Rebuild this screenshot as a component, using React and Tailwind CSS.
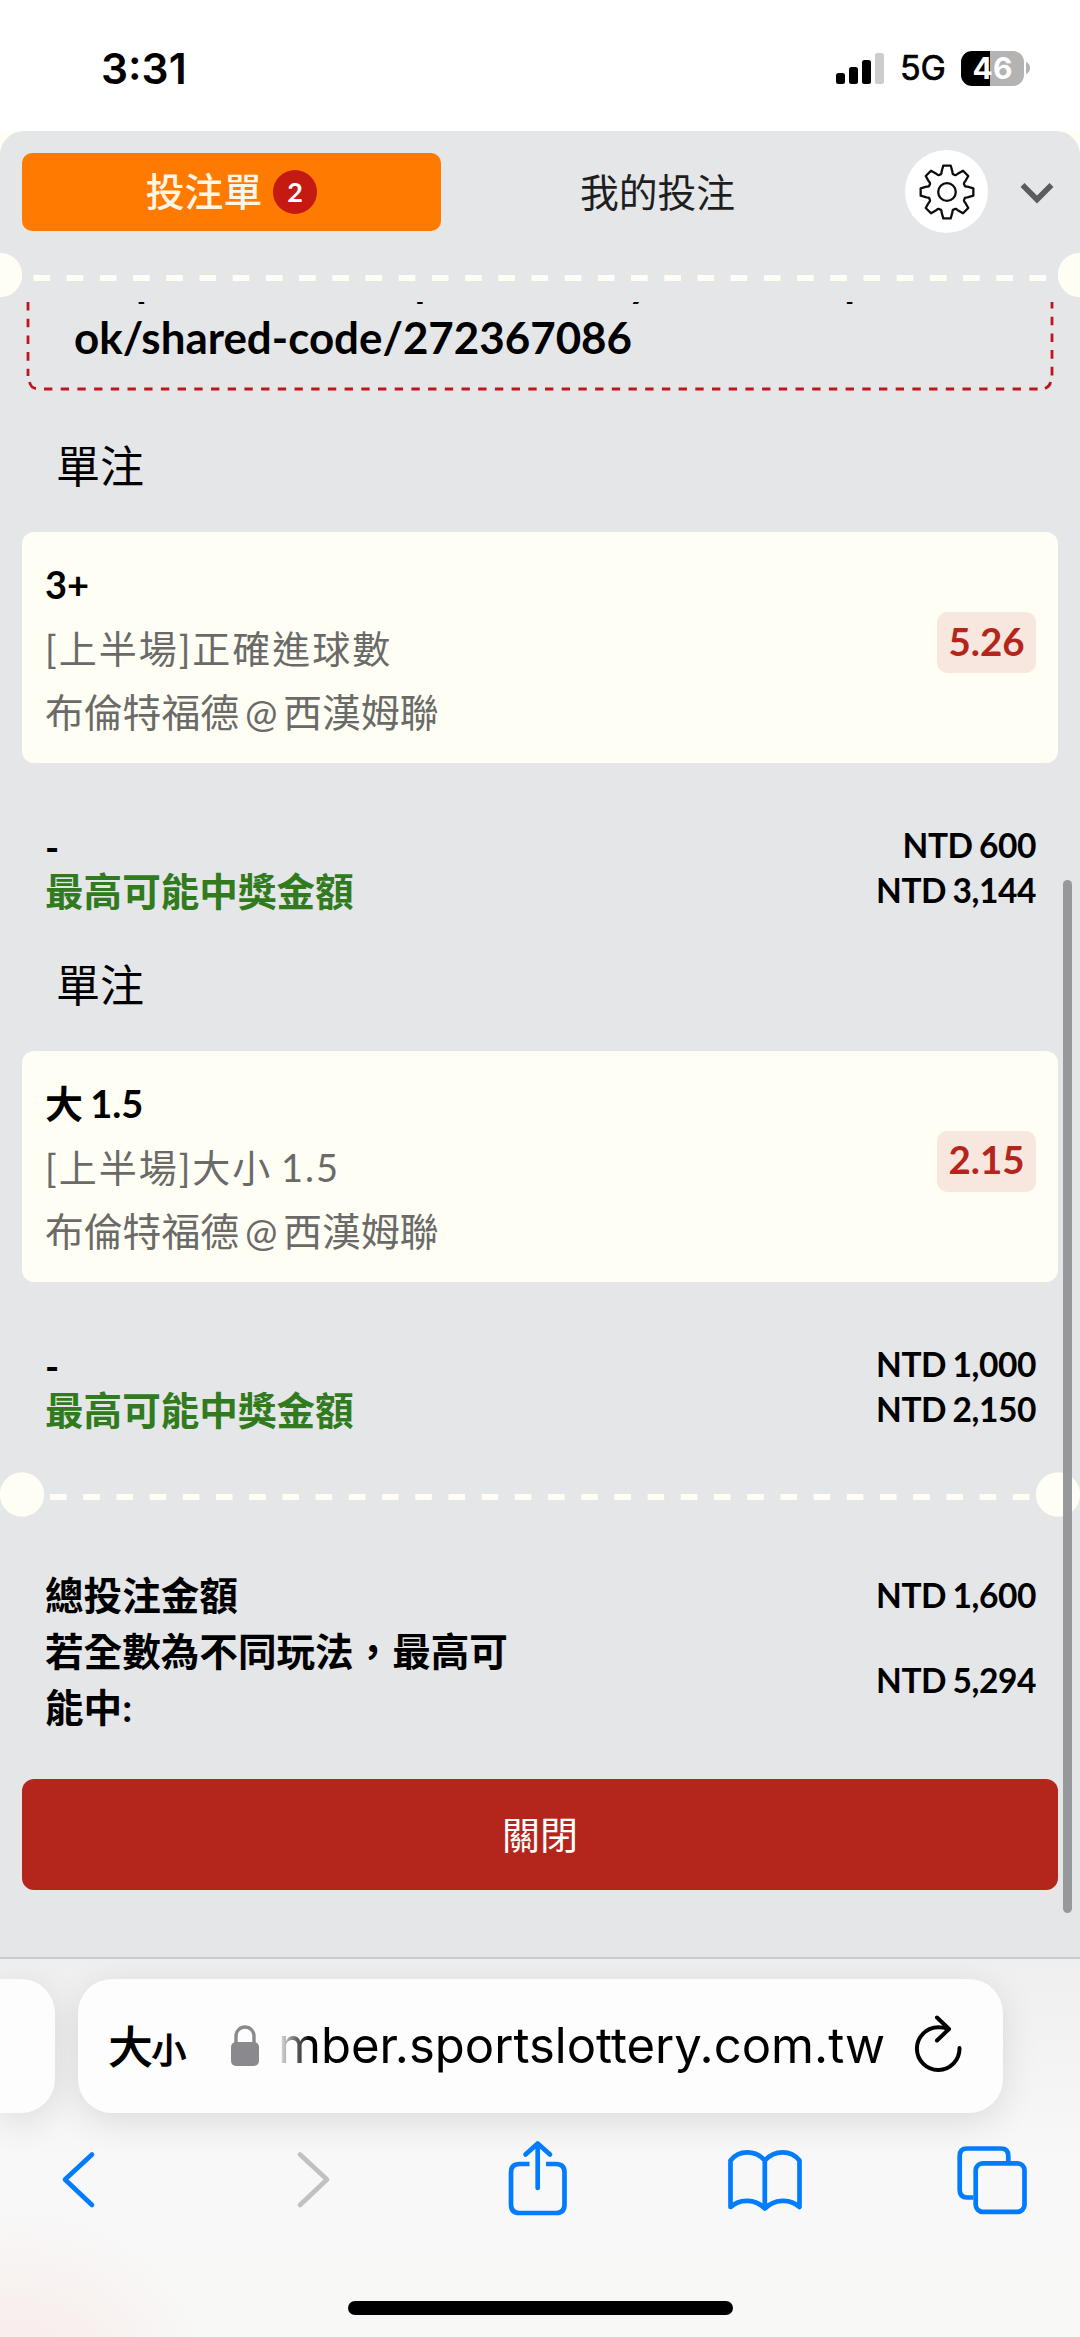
const LATIN = "font-['Lato','Noto_Sans_CJK_TC',sans-serif]";

function Perforation({ wide }) {
  return wide ? (
    <svg className="block h-[46px] w-[1080px]" viewBox="0 0 1080 46">
      <circle cx="22" cy="22.5" r="22.2" fill="#fffef4" />
      <circle cx="1058" cy="22.5" r="22.2" fill="#fffef4" />
      <line x1="50" x2="1031" y1="25" y2="25" stroke="#fffef4" strokeWidth="6" strokeDasharray="16.6 16.6" />
    </svg>
  ) : (
    <svg className="block h-[46px] w-[1080px]" viewBox="0 0 1080 46">
      <circle cx="0" cy="23" r="22.2" fill="#fffef4" />
      <circle cx="1080" cy="23" r="22.2" fill="#fffef4" />
      <line x1="33.5" x2="1048" y1="26" y2="26" stroke="#fffef4" strokeWidth="6" strokeDasharray="16.6 16.6" />
    </svg>
  );
}

function gearPath() {
  const pts = [];
  for (let i = 0; i < 8; i++) {
    const a = (i * Math.PI) / 4 - Math.PI / 2;
    const at = (da, r) => `${(Math.cos(a + da) * r).toFixed(2)} ${(Math.sin(a + da) * r).toFixed(2)}`;
    pts.push(`${i ? "L" : "M"}${at(-0.14, 26.6)} L${at(0.14, 26.6)} L${at(0.255, 21.2)} Q${at(0.3, 18.2)} ${at(0.3927, 18.9)} Q${at(0.485, 18.2)} ${at(0.53, 21.2)}`);
  }
  return pts.join(" ") + " Z";
}

function Bet({ title, market, odds, stake, win }) {
  return (
    <section className="h-[500px] shrink-0">
      <h2 className="h-[68px] pl-[56px] text-[44px] leading-[66px] text-black">單注</h2>
      <div className="mx-[22px] mt-[31px] flex h-[231px] rounded-[12px] bg-[#fffef4] pl-[23px] pr-[22px]">
        <div className="flex-1 pt-[22px]">
          <div className="h-[61px] text-[38px] font-bold leading-[60px] text-black [word-spacing:-2px]">{title}</div>
          <div className="h-[66px] text-[38px] leading-[66px] tracking-[2px] text-[#6a6a68] [word-spacing:-3px]">{market}</div>
          <div className="h-[62px] text-[38.8px] leading-[62px] text-[#6a6a68] [word-spacing:-4px]">布倫特福德 @ 西漢姆聯</div>
        </div>
        <div className="mt-[80px] flex h-[61px] w-[99px] items-center justify-center rounded-[10px] bg-[#f8e7df] pb-[2px] text-[38.5px] font-bold text-[#b4261b]">{odds}</div>
      </div>
      <div className="mt-[58px] flex h-[112px] justify-between pl-[45px] pr-[44px] font-bold text-black">
        <div>
          <div className="h-[47px] text-[38px] leading-[52px]">-</div>
          <div className="h-[56px] text-[38.6px] leading-[46px] text-[#317a1e]">最高可能中獎金額</div>
        </div>
        <div className="pt-[2px] text-right text-[33.5px] leading-[45px] tracking-[-0.4px] [word-spacing:-1.5px]">
          <div>{stake}</div>
          <div>{win}</div>
        </div>
      </div>
    </section>
  );
}

export default function App() {
  return (
    <div className={`${LATIN} flex h-[2337px] w-[1080px] flex-col overflow-hidden bg-white`}>
      <header className="flex h-[131px] shrink-0 items-start justify-between pl-[101px] pr-[50px] font-['Inter',sans-serif]">
        <div className="mt-[43px] text-[42.5px] font-semibold leading-[52px] text-black">3:31</div>
        <div className="mt-[49px] flex h-[38px] items-center">
          <svg className="mr-[15px] h-[34px] w-[49px]" viewBox="0 0 49 34">
            <rect x="0" y="22" width="9" height="11" rx="2.5" />
            <rect x="13" y="16" width="9" height="17" rx="2.5" />
            <rect x="26" y="9" width="9" height="24" rx="2.5" />
            <rect x="39" y="2" width="9" height="31" rx="2.5" fill="#cccccc" />
          </svg>
          <span className="mr-[15px] text-[34px] leading-[38px] text-black [-webkit-text-stroke:0.7px_black]">5G</span>
          <div className="flex h-[35px] w-[63px] items-center justify-center rounded-[11px] bg-[linear-gradient(90deg,#000_46%,#b3b3b3_46%)] text-[30px] font-bold leading-[35px] text-white">46</div>
          <svg className="ml-[2px] h-[12px] w-[4px]" viewBox="0 0 4 12">
            <path d="M0 0Q4 1.500 4 6T0 12Z" fill="#b3b3b3" />
          </svg>
        </div>
      </header>

      <div className="h-[1826px] shrink-0 bg-[#fffef4]">
        <main className="relative flex h-full flex-col overflow-hidden rounded-t-[24px] bg-[#e4e6e8]">
          <nav className="flex h-[121px] shrink-0 items-start pl-[22px]">
            <button className="mt-[22px] flex h-[78px] w-[419px] items-center justify-center rounded-[10px] bg-[#ff7a00] text-[38.8px] font-medium leading-[60px] text-[#fff6e8]">
              <span className="pb-[2px]">投注單</span>
              <span className="ml-[11px] flex h-[44px] w-[44px] items-center justify-center rounded-full bg-[#c41a12] text-[27px] font-bold text-white">2</span>
            </button>
            <button className="mt-[22px] h-[78px] w-[433px] text-[38.8px] leading-[76px] text-[#1e1e1e]">我的投注</button>
            <div className="ml-[31px] mt-[19px] flex h-[83px] w-[83px] items-center justify-center rounded-full bg-white">
              <svg className="h-[60px] w-[60px]" viewBox="-30 -30 60 60" fill="none" stroke="#0c0c0c" strokeWidth="2.3" strokeLinejoin="round">
                <path d={gearPath()} />
                <circle r="8.8" />
              </svg>
            </div>
            <svg className="ml-[32px] mt-[51px] h-[22px] w-[34px]" viewBox="0 0 34 22" fill="none" stroke="#5c5c5c" strokeWidth="5.5">
              <path d="M2.5 3 L17 17.5 L31.500 3" />
            </svg>
          </nav>
          <Perforation />
          <div className="mt-[4px] h-[90px] shrink-0 overflow-hidden">
            <svg className="absolute h-[90px] w-[1080px]" viewBox="0 0 1080 90" fill="none" stroke="#c1151b" strokeWidth="2.8">
              <path d="M28 0V74" strokeDasharray="8.600 8.100" />
              <path d="M1052 0V74" strokeDasharray="8.600 8.100" strokeDashoffset="2" />
              <path d="M29.500 80 Q31 86 36 86.500 M1050.500 80 Q1050 84 1045 86.500" />
              <path d="M44 87H1041" strokeDasharray="8.350 8.350" />
            </svg>
            <div className="-mt-[50px] pl-[74px] text-[43.9px] font-bold leading-[57px] text-black">
              <div className="pl-[4px] tracking-[0.3px]">https://member.sportslottery.com.tw/sportsbo</div>
              <div>ok/shared-code/272367086</div>
            </div>
          </div>
          <div className="h-[41px] shrink-0" />
          <Bet title="3+" market="[上半場]正確進球數" odds="5.26" stake="NTD 600" win="NTD 3,144" />
          <div className="h-[18.5px] shrink-0" />
          <Bet title="大 1.5" market="[上半場]大小 1.5" odds="2.15" stake="NTD 1,000" win="NTD 2,150" />
          <div className="h-[20.5px] shrink-0" />
          <Perforation wide />
          <div className="mt-[43px] flex h-[218px] shrink-0 justify-between pl-[45px] pr-[44px] text-black">
            <div className="w-[480px] pt-[6px] text-[38.6px] font-bold leading-[56px]">
              <div>總投注金額</div>
              <div>若全數為不同玩法，最高可</div>
              <div>能中:</div>
            </div>
            <div className="text-right text-[33.5px] font-bold leading-[60px] tracking-[-0.4px] [word-spacing:-1.5px]">
              <div className="mt-[4px]">NTD 1,600</div>
              <div className="mt-[25px]">NTD 5,294</div>
            </div>
          </div>
          <button className="mx-[22px] h-[111px] shrink-0 rounded-[12px] bg-[#b4261b] text-[38px] text-white">關閉</button>
          <div className="absolute left-[1063px] top-[749px] h-[1033px] w-[9px] rounded-full bg-[#929395]/95" />
        </main>
      </div>

      <footer className="relative h-[380px] shrink-0 overflow-hidden border-t-2 border-[#c9cacb] bg-[radial-gradient(circle_at_20px_440px,#f8e8e7_0px,#f8f8f700_190px),linear-gradient(#efefef,#f8f8f8_55%,#f8f8f7)]">
        <div className="mt-[20px] flex h-[134px]">
          <div className="w-[55px] rounded-r-[34px] bg-[#fdfdfd] shadow-[0_8px_36px_#0000001c]" />
          <div className="ml-[23px] flex w-[925px] items-center rounded-[34px] bg-[#fdfdfd] pl-[31px] pr-[39px] text-black shadow-[0_8px_36px_#0000001c]">
            <span className="flex w-[78px] items-baseline font-['Noto_Sans_CJK_TC',sans-serif] leading-[60px] [-webkit-text-stroke:1.6px_black]"><span className="text-[43px]">大</span><span className="text-[34px]">小</span></span>
            <svg className="ml-[43px] h-[42px] w-[30px]" viewBox="0 0 30 42">
              <rect x="1" y="17" width="28" height="24" rx="5" fill="#8a898e" />
              <path d="M6 20V11a9 9 0 0 1 18 0v9" fill="none" stroke="#8a898e" strokeWidth="3.4" />
            </svg>
            <div className="ml-[12px] flex w-[613px] justify-end whitespace-nowrap font-['Inter',sans-serif] text-[49px] [mask-image:linear-gradient(90deg,transparent_4px,#000_38px)]">mber.sportslottery.com.tw</div>
            <svg className="ml-auto h-[60px] w-[50px] overflow-visible" viewBox="0 0 50 60" fill="none" stroke="black" strokeWidth="4" strokeLinecap="round" strokeLinejoin="round">
              <path d="M45.500 32A21.300 21.300 0 1 1 24.300 11.300c4 0 7 .6 10 1.500" />
              <path d="M23 1.500L35 13L23 24.500" />
            </svg>
          </div>
        </div>
        <svg className="mt-[21px] block h-[90px] w-[1080px]" viewBox="0 0 1080 90" fill="none" stroke="#027cff" strokeWidth="4.700" strokeLinecap="round" strokeLinejoin="round">
          <path d="M92 20.500L65 45.500L92 71" />
          <path d="M300 20.500L327 45.500L300 71" stroke="#c1c1c1" />
          <path d="M529.500 30H519.500Q511 30 511 38.500V70.500Q511 79 519.500 79H556Q564.500 79 564.500 70.500V38.500Q564.500 30 556 30H546" strokeLinecap="butt" />
          <path d="M537.700 54V10M525.500 20.500L537.700 9.500L550 20.500" />
          <path d="M764.800 74.500V26.500C755 15.500 739 16 730.500 26.500V73C740 64 756 65 764.800 74.500C774 65 790 64 799.500 73V26.500C791 16 775 15.500 764.800 26.500" />
          <rect x="975.700" y="29.300" width="48.800" height="48.500" rx="7" />
          <path d="M973.500 63.500H967Q959.700 63.500 959.700 56V22Q959.700 14.500 967 14.500H1001Q1008.300 14.500 1008.300 22V27" strokeLinecap="butt" />
        </svg>
        <div className="mx-auto mt-[77px] h-[14px] w-[385px] rounded-full bg-black" />
      </footer>
    </div>
  );
}
